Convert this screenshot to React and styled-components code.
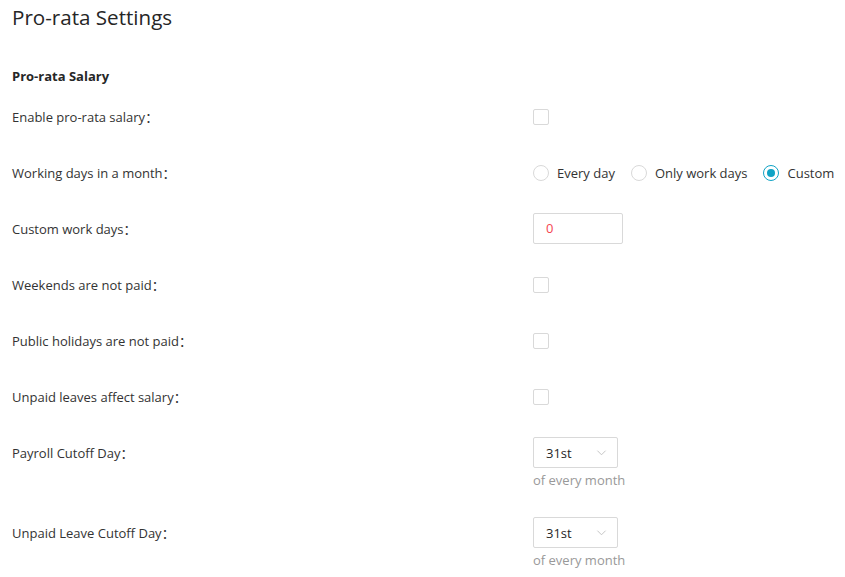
import React from "react"
import styled, { createGlobalStyle } from "styled-components"

const GlobalStyle = createGlobalStyle`
  body {
    margin: 0;
    background: #fff;
    font-family: "Open Sans", "Noto Sans CJK SC", sans-serif;
    color: #333;
  }
`

const Page = styled.div`
  padding: 3px 8px 0 12px;
`

const Title = styled.h2`
  margin: 0;
  font-size: 20.6px;
  line-height: 28px;
  font-weight: 400;
  color: #262626;
`

const SectionHeader = styled.h5`
  margin: 35px 0 15px;
  font-size: 13px;
  line-height: 20px;
  font-weight: bold;
  color: #262626;
`

const Form = styled.div`
  display: flex;
  flex-direction: column;
  gap: 24px;
`

const Row = styled.div`
  display: grid;
  grid-template-columns: 521px auto;
  align-items: start;
`

const Label = styled.label`
  font-size: 13px;
  line-height: 32px;
  color: #333;
  white-space: nowrap;
`

const Control = styled.div`
  display: flex;
  flex-direction: column;
  align-items: flex-start;
`

const ControlLine = styled.div`
  display: flex;
  align-items: center;
  height: 31px;
  gap: 16px;
  white-space: nowrap;
`

const Checkbox = styled.span`
  display: inline-block;
  width: 16px;
  height: 16px;
  box-sizing: border-box;
  border: 1px solid #d9d9d9;
  border-radius: 2px;
  background: #fff;
`

const RadioItem = styled.label`
  display: flex;
  align-items: center;
  gap: 8px;
  font-size: 13px;
  color: #333;
`

const RadioCircle = styled.span`
  position: relative;
  flex: none;
  width: 16px;
  height: 16px;
  box-sizing: border-box;
  border-radius: 50%;
  border: 1px solid ${(p) => (p.$checked ? "#10a3c5" : "#d9d9d9")};
  background: #fff;

  &::after {
    content: "";
    display: ${(p) => (p.$checked ? "block" : "none")};
    position: absolute;
    left: 3px;
    top: 3px;
    width: 8px;
    height: 8px;
    border-radius: 50%;
    background: #10a3c5;
  }
`

const TextInput = styled.div`
  width: 90px;
  height: 31px;
  box-sizing: border-box;
  border: 1px solid #d9d9d9;
  border-radius: 2px;
  padding: 0 12px;
  font-size: 13px;
  line-height: 29px;
  color: #f5454f;
`

const Select = styled.div`
  width: 85px;
  height: 31px;
  box-sizing: border-box;
  border: 1px solid #d9d9d9;
  border-radius: 2px;
  padding: 0 10px 0 12px;
  display: flex;
  align-items: center;
  justify-content: space-between;
  font-size: 13px;
  color: #262626;
`

const Helper = styled.div`
  margin: 2px 0 3px;
  font-size: 13px;
  line-height: 20px;
  color: #999;
`

const Chevron = () => (
  <svg width="11" height="11" viewBox="0 0 12 12" fill="none">
    <path d="M1.5 4 L6 8.5 L10.5 4" stroke="#bfbfbf" strokeWidth="1" />
  </svg>
)

const Radio = ({ checked, children }) => (
  <RadioItem>
    <RadioCircle $checked={checked} />
    {children}
  </RadioItem>
)

const Field = ({ label, children, helper }) => (
  <Row>
    <Label>{label}：</Label>
    <Control>
      <ControlLine>{children}</ControlLine>
      {helper && <Helper>{helper}</Helper>}
    </Control>
  </Row>
)

export default function App() {
  return (
    <Page>
      <GlobalStyle />
      <Title>Pro-rata Settings</Title>
      <SectionHeader>Pro-rata Salary</SectionHeader>
      <Form>
        <Field label="Enable pro-rata salary">
          <Checkbox />
        </Field>
        <Field label="Working days in a month">
          <Radio>Every day</Radio>
          <Radio>Only work days</Radio>
          <Radio checked>Custom</Radio>
        </Field>
        <Field label="Custom work days">
          <TextInput>0</TextInput>
        </Field>
        <Field label="Weekends are not paid">
          <Checkbox />
        </Field>
        <Field label="Public holidays are not paid">
          <Checkbox />
        </Field>
        <Field label="Unpaid leaves affect salary">
          <Checkbox />
        </Field>
        <Field label="Payroll Cutoff Day" helper="of every month">
          <Select>
            31st
            <Chevron />
          </Select>
        </Field>
        <Field label="Unpaid Leave Cutoff Day" helper="of every month">
          <Select>
            31st
            <Chevron />
          </Select>
        </Field>
      </Form>
    </Page>
  )
}
